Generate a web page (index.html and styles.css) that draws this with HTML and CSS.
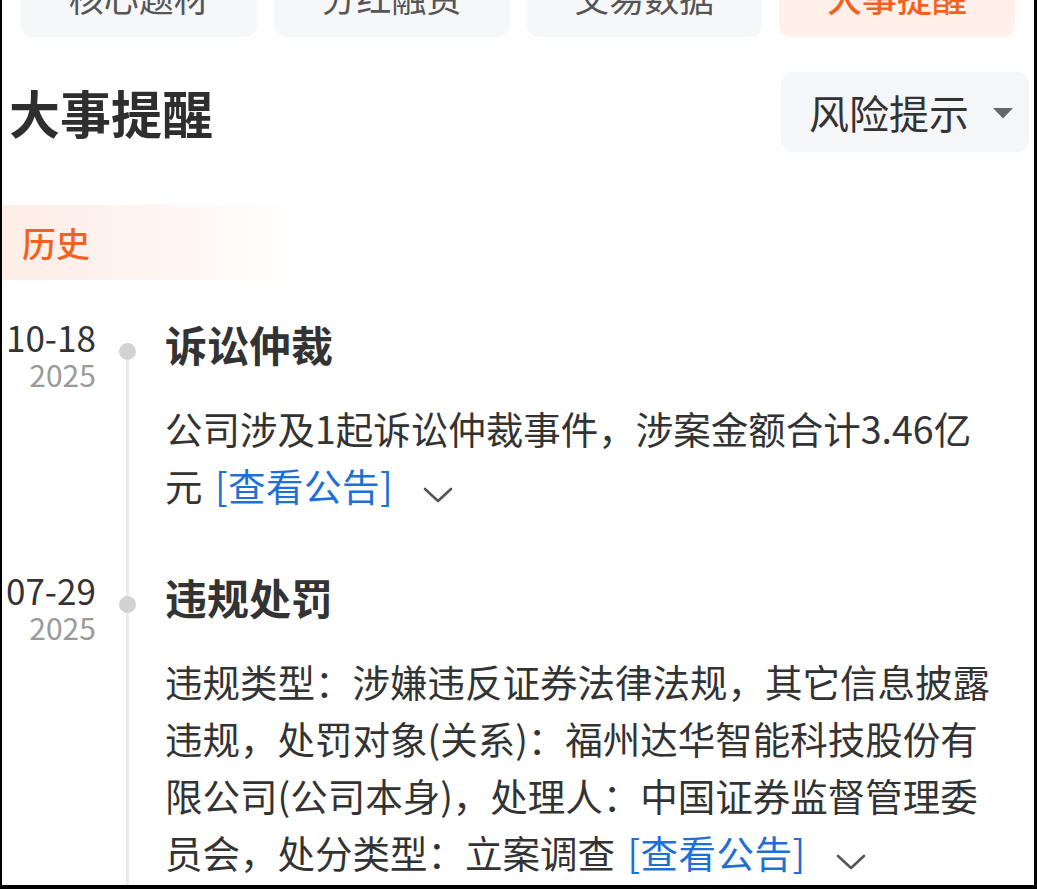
FILE: index.html
```html
<!DOCTYPE html>
<html lang="zh-CN">
<head>
<meta charset="utf-8">
<title>大事提醒</title>
<link rel="stylesheet" href="styles.css">
</head>
<body>
<div class="frame">
  <nav class="tabs">
    <div class="tab">核心题材</div>
    <div class="tab">分红融资</div>
    <div class="tab">交易数据</div>
    <div class="tab tab-active">大事提醒</div>
  </nav>

  <header class="header">
    <h1 class="title">大事提醒</h1>
    <div class="select">
      <span class="select-text">风险提示</span>
      <svg class="caret" width="20" height="11" viewBox="0 0 20 11"><polygon points="0,0 20,0 10,10.5" fill="#666"/></svg>
    </div>
  </header>

  <div class="band"><span class="band-text">历史</span></div>

  <section class="timeline">
    <article class="item item-first">
      <div class="date">
        <div class="date-inner">
          <span class="md">10-18</span>
          <span class="year">2025</span>
        </div>
      </div>
      <div class="axis"><span class="dot"></span></div>
      <div class="content">
        <h2 class="ev-title">诉讼仲裁</h2>
        <p class="desc">公司涉及1起诉讼仲裁事件，涉案金额合计3.46亿元 <a class="link">[查看公告]</a><svg class="chev" width="30" height="16" viewBox="0 0 30 16"><polyline points="2,2 15,14 28,2" fill="none" stroke="#555" stroke-width="2.6" stroke-linecap="round" stroke-linejoin="round"/></svg></p>
      </div>
    </article>

    <article class="item">
      <div class="date">
        <div class="date-inner">
          <span class="md">07-29</span>
          <span class="year">2025</span>
        </div>
      </div>
      <div class="axis"><span class="dot"></span></div>
      <div class="content">
        <h2 class="ev-title">违规处罚</h2>
        <p class="desc">违规类型：涉嫌违反证券法律法规，其它信息披露违规，处罚对象(关系)：福州达华智能科技股份有限公司(公司本身)，处理人：中国证券监督管理委员会，处分类型：立案调查 <a class="link">[查看公告]</a><svg class="chev" width="30" height="16" viewBox="0 0 30 16"><polyline points="2,2 15,14 28,2" fill="none" stroke="#555" stroke-width="2.6" stroke-linecap="round" stroke-linejoin="round"/></svg></p>
      </div>
    </article>
  </section>
</div>
</body>
</html>
```

FILE: styles.css
```css
html, body {
  margin: 0;
  padding: 0;
  background: #000;
}

.frame {
  width: 1037px;
  height: 889px;
  box-sizing: border-box;
  border-left: 2px solid #000;
  border-right: 3px solid #000;
  border-bottom: 4px solid #000;
  background: #fff;
  overflow: hidden;
  font-family: "Noto Sans CJK SC", "Noto Sans", sans-serif;
  color: #333;
}

.tabs {
  display: grid;
  grid-template-columns: repeat(4, 1fr);
  gap: 17px;
  margin: -43px 19px 0 19px;
}

.tab {
  height: 80px;
  line-height: 80px;
  border-radius: 12px;
  background: #f6f7f9;
  text-align: center;
  font-size: 35px;
  color: #555;
}

.tab-active {
  background: #fff0ea;
  color: #f2621f;
  font-weight: 500;
}

.header {
  display: flex;
  justify-content: space-between;
  align-items: center;
  margin-top: 35px;
  padding: 0 5px 0 7px;
}

.title {
  margin: 0;
  font-size: 51px;
  font-weight: 700;
  color: #2e2e2e;
  line-height: 60px;
}

.select {
  display: flex;
  align-items: center;
  width: 248px;
  height: 80px;
  box-sizing: border-box;
  padding-left: 28px;
  border-radius: 12px;
  background: #f5f6f8;
}

.select-text {
  font-size: 40px;
  color: #333;
  line-height: 48px;
}

.caret {
  margin-left: 24px;
  margin-top: 2px;
}

.band {
  margin-top: 53px;
  width: 300px;
  height: 75px;
  display: flex;
  align-items: center;
  padding-left: 20px;
  box-sizing: border-box;
  background: linear-gradient(to right, #fdede6 0%, #fef3ee 40%, #ffffff 100%);
}

.band-text {
  font-size: 34px;
  font-weight: 500;
  color: #f2621f;
}

.timeline {
  margin-top: 36px;
}

.item {
  display: flex;
  padding-left: 4px;
  padding-bottom: 56px;
}

.date {
  width: 104px;
  flex: none;
  margin-top: 2px;
}

.date-inner {
  display: inline-flex;
  flex-direction: column;
  align-items: flex-end;
}

.md {
  font-size: 35px;
  line-height: 38px;
  color: #333;
}

.year {
  font-size: 30px;
  line-height: 36px;
  color: #9a9a9a;
}

.axis {
  width: 35px;
  position: relative;
  flex: none;
}

.axis::before {
  content: "";
  position: absolute;
  left: 16px;
  width: 3px;
  top: 0;
  bottom: -56px;
  background: #ebebeb;
}

.item-first .axis::before {
  top: 36px;
}

.dot {
  position: absolute;
  left: 9px;
  top: 27px;
  width: 17px;
  height: 17px;
  border-radius: 50%;
  background: #d2d2d2;
}

.content {
  margin-left: 20px;
  width: 832px;
}

.ev-title {
  margin: 0;
  font-size: 42px;
  font-weight: 700;
  line-height: 56px;
  color: #333;
}

.desc {
  margin: 27px 0 0 0;
  font-size: 37.5px;
  line-height: 57px;
  color: #333;
}

.link {
  color: #1e6fd6;
  margin-left: 4px;
  letter-spacing: 0.5px;
}

.chev {
  margin-left: 30px;
  vertical-align: -2px;
}
```
